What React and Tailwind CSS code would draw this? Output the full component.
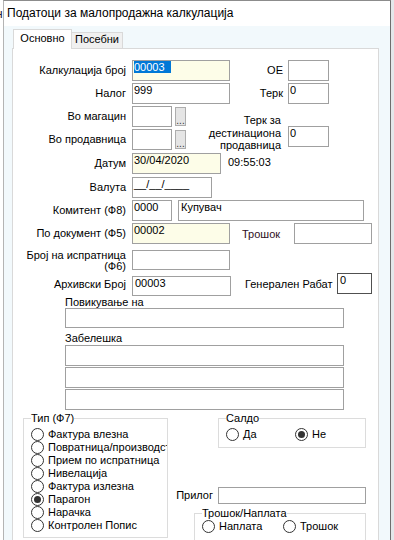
import React from 'react';

const Field = ({ className = '', children }) => (
    <div className={`shrink-0 border pl-[1px] leading-[13px] whitespace-nowrap overflow-hidden ${className}`}>
        {children}
    </div>
);

const Label = ({ className = '', children }) => (
    <div className={`shrink-0 whitespace-nowrap ${className}`}>{children}</div>
);

const Dots = () => (
    <div className="ml-[3px] w-[11px] h-[19px] shrink-0 border border-[#adadad] bg-[#e5e5e5] flex items-end justify-center leading-[9px] text-[10px] text-[#333]">
        ...
    </div>
);

const Radio = ({ label, checked, className = '' }) => (
    <div className={`flex items-center h-[13px] shrink-0 ${className}`}>
        <span className="w-[13px] h-[13px] rounded-full border border-[#333] bg-white flex items-center justify-center shrink-0">
            {checked && <span className="w-[7px] h-[7px] rounded-full bg-[#333]" />}
        </span>
        <span className="ml-[4px] leading-[13px] whitespace-nowrap">{label}</span>
    </div>
);

const tipOptions = [
    { label: 'Фактура влезна' },
    { label: 'Повратница/производство' },
    { label: 'Прием по испратница' },
    { label: 'Нивелација' },
    { label: 'Фактура излезна' },
    { label: 'Парагон', checked: true },
    { label: 'Нарачка' },
    { label: 'Контролен Попис' },
];

export default function App() {
    return (
        <div className="w-[394px] h-[540px] overflow-hidden flex bg-[#e6e9eb] font-['Liberation_Sans',Arial,sans-serif] text-[11px] text-black">
            {/* window behind */}
            <div className="w-[3px] shrink-0 bg-white overflow-hidden pt-[7px] text-[12px] leading-[14px] text-[#202040]">
                <span className="block -ml-[4px]">н</span>
            </div>

            {/* dialog */}
            <div className="w-[388px] shrink-0 flex flex-col border-l border-l-[#b4b4b4] border-r border-r-[#6e6e6e] border-t border-t-[#8c8c8c] bg-[#f2f9fc]">
                {/* Title bar */}
                <div className="h-[25px] shrink-0 bg-white flex items-center pl-[3px] pb-[1px] text-[12px] leading-[14px]">
                    Податоци за малопродажна калкулација
                </div>

                {/* Tabs */}
                <div className="h-[22px] shrink-0 flex items-end pl-[9px]">
                    <div className="relative z-10 -mb-px w-[59px] h-[20px] border border-b-0 border-[#d9d9d9] bg-white text-center pt-[2px] leading-[13px]">
                        Основно
                    </div>
                    <div className="w-[51px] h-[16px] border border-b-0 border-l-0 border-[#d9d9d9] bg-[#f0f0f0] text-center leading-[13px]">
                        Посебни
                    </div>
                </div>

                {/* Tab page */}
                <div className="ml-[8px] w-[367px] flex-1 border border-[#d9d9d9] bg-white flex flex-col">
                    {/* Калкулација број */}
                    <div className="mt-[11px] flex items-center">
                        <Label className="w-[119px] pr-[6px] text-right leading-[13px]">Калкулација број</Label>
                        <Field className="w-[98px] h-[21px] border-[#a0a0a0] bg-[#fdfde8]">
                            <span className="bg-[#0078d7] text-white pr-[6px]">00003</span>
                        </Field>
                        <Label className="w-[58px] pr-[5px] text-right leading-[13px]">ОЕ</Label>
                        <Field className="w-[41px] h-[21px] border-[#a0a0a0] bg-white" />
                    </div>

                    {/* Налог */}
                    <div className="mt-[2px] flex items-center">
                        <Label className="w-[119px] pr-[6px] text-right leading-[13px]">Налог</Label>
                        <Field className="w-[98px] h-[21px] border-[#a0a0a0] bg-white">999</Field>
                        <Label className="w-[58px] pr-[5px] text-right leading-[13px]">Терк</Label>
                        <Field className="w-[41px] h-[21px] border-[#a0a0a0] bg-white">0</Field>
                    </div>

                    {/* Магацин / продавница */}
                    <div className="mt-[2px] h-[44px] flex items-start">
                        <div className="w-[173px] shrink-0 flex flex-col">
                            <div className="flex items-center h-[21px]">
                                <Label className="w-[119px] pr-[6px] text-right leading-[13px]">Во магацин</Label>
                                <Field className="w-[40px] h-[21px] border-[#a0a0a0] bg-white" />
                                <Dots />
                            </div>
                            <div className="mt-[2px] flex items-center h-[21px]">
                                <Label className="w-[119px] pr-[6px] text-right leading-[13px]">Во продавница</Label>
                                <Field className="w-[40px] h-[21px] border-[#a0a0a0] bg-white" />
                                <Dots />
                            </div>
                        </div>
                        <div className="w-[102px] h-[30px] shrink-0 mt-[8px] pr-[7px] text-right leading-[12.5px]">
                            Терк за<br />дестинациона<br />продавница
                        </div>
                        <Field className="mt-[20px] w-[41px] h-[21px] border-[#a0a0a0] bg-white">0</Field>
                    </div>

                    {/* Датум */}
                    <div className="mt-[3px] flex items-center">
                        <Label className="w-[119px] pr-[6px] text-right leading-[13px]">Датум</Label>
                        <Field className="w-[89px] h-[21px] border-[#a0a0a0] bg-[#fdfde8]">30/04/2020</Field>
                        <Label className="ml-[7px] -mt-[2px] leading-[13px]">09:55:03</Label>
                    </div>

                    {/* Валута */}
                    <div className="mt-[3px] flex items-center">
                        <Label className="w-[119px] pr-[6px] text-right leading-[13px]">Валута</Label>
                        <Field className="w-[80px] h-[21px] border-[#a0a0a0] bg-white">__/__/____</Field>
                    </div>

                    {/* Комитент */}
                    <div className="mt-[2px] flex items-center">
                        <Label className="w-[119px] pr-[6px] text-right leading-[13px]">Комитент (Ф8)</Label>
                        <Field className="w-[40px] h-[21px] border-[#a0a0a0] bg-white">0000</Field>
                        <Field className="ml-[6px] w-[186px] h-[21px] border-[#a0a0a0] bg-white pl-[2px]">Купувач</Field>
                    </div>

                    {/* По документ */}
                    <div className="mt-[2px] flex items-center">
                        <Label className="w-[119px] pr-[6px] text-right leading-[13px]">По документ (Ф5)</Label>
                        <Field className="w-[98px] h-[21px] border-[#a0a0a0] bg-[#fdfde8]">00002</Field>
                        <Label className="w-[64px] pl-[12px] mt-[2px] leading-[13px] text-[#301024]">Трошок</Label>
                        <Field className="w-[78px] h-[21px] border-[#a0a0a0] bg-white" />
                    </div>

                    {/* Број на испратница */}
                    <div className="mt-[6px] h-[20px] flex items-start">
                        <Label className="w-[119px] h-[20px] pr-[6px] text-right leading-[11px]">
                            Број на испратница<br />(Ф6)
                        </Label>
                        <Field className="w-[98px] h-[20px] border-[#a0a0a0] bg-white" />
                    </div>

                    {/* Архивски број */}
                    <div className="mt-[3px] h-[23px] flex items-start">
                        <Label className="w-[119px] pr-[6px] text-right mt-[5px] leading-[13px]">Архивски Број</Label>
                        <Field className="mt-[3px] w-[99px] h-[20px] border-[#a0a0a0] bg-white pl-[2px]">00003</Field>
                        <Label className="w-[106px] pl-[14px] mt-[5px] leading-[13px]">Генерален Рабат</Label>
                        <Field className="w-[35px] h-[21px] border-[#505050] bg-white pl-[2px]">0</Field>
                    </div>

                    {/* Повикување на / Забелешка */}
                    <div className="ml-[52px] flex flex-col">
                        <Label className="leading-[12px]">Повикување на</Label>
                        <Field className="w-[279px] h-[20px] border-[#a0a0a0] bg-white" />
                        <Label className="mt-[4px] leading-[12px]">Забелешка</Label>
                        <Field className="mt-[1px] w-[279px] h-[21px] border-[#a0a0a0] bg-white" />
                        <Field className="mt-[1px] w-[279px] h-[21px] border-[#a0a0a0] bg-white" />
                        <Field className="mt-[1px] w-[279px] h-[21px] border-[#a0a0a0] bg-white" />
                    </div>

                    {/* Групи */}
                    <div className="mt-[2px] flex items-start">
                        <fieldset className="ml-[10px] w-[145px] min-w-0 h-[126px] shrink-0 border border-[#dcdcdc] overflow-hidden">
                            <legend className="ml-[7px] leading-[13px]">Тип (Ф7)</legend>
                            <div className="mt-[3px] pl-[7px] flex flex-col">
                                {tipOptions.map((o) => (
                                    <Radio key={o.label} label={o.label} checked={o.checked} />
                                ))}
                            </div>
                        </fieldset>

                        <div className="w-[198px] shrink-0 flex flex-col items-end">
                            <fieldset className="w-[148px] min-w-0 h-[36px] border border-[#dcdcdc]">
                                <legend className="ml-[7px] leading-[13px]">Салдо</legend>
                                <div className="mt-[3px] pl-[7px] flex">
                                    <Radio label="Да" className="w-[69px]" />
                                    <Radio label="Не" checked />
                                </div>
                            </fieldset>

                            <div className="mt-[39px] flex items-center">
                                <Label className="pr-[5px] leading-[13px]">Прилог</Label>
                                <Field className="w-[148px] h-[17px] border-[#a0a0a0] bg-white" />
                            </div>

                            <fieldset className="mt-[3px] w-[172px] min-w-0 h-[34px] border border-[#dcdcdc]">
                                <legend className="ml-[7px] leading-[13px]">Трошок/Наплата</legend>
                                <div className="pl-[7px] flex">
                                    <Radio label="Наплата" className="w-[81px]" />
                                    <Radio label="Трошок" />
                                </div>
                            </fieldset>
                        </div>
                    </div>
                </div>
            </div>

            <div className="w-[3px] shrink-0 bg-[#e4e7ea]" />
        </div>
    );
}
